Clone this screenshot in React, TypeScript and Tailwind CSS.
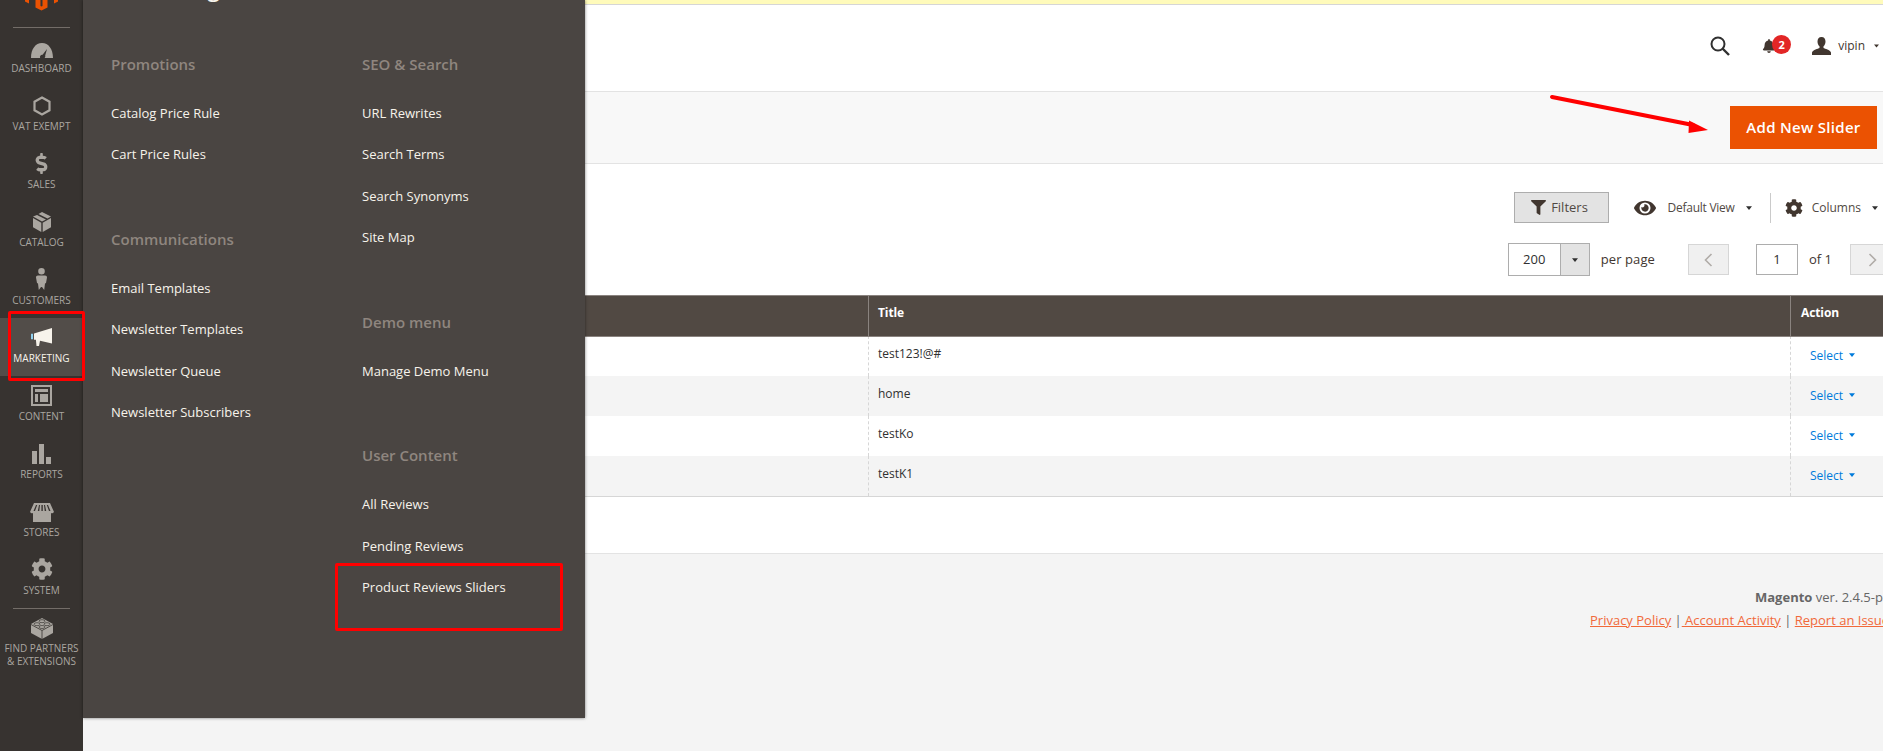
import React from "react";
import { FaBell, FaCog, FaEye, FaFilter, FaDollarSign } from "react-icons/fa";

const Caret = ({ c = "#303030", w = 8, h = 5 }: { c?: string; w?: number; h?: number }) => (
  <svg width={w} height={h} viewBox="0 0 8 5" className="shrink-0"><path d="M0 0h8L4 5z" fill={c} /></svg>
);

const Gauge = () => (
  <svg width="22" height="15" viewBox="0 0 22 15"><path fillRule="evenodd" fill="currentColor" d="M0 15C0 6 4.500 0 11 0s11 6 11 15H13.500c.7-.8 1-1.600.7-2.500L16 6l-4.400 5.800c-1.800-.2-3.100 1.400-2.500 3.200z" /></svg>
);
const Hexagon = () => (
  <svg width="18" height="20" viewBox="0 0 18 20"><path d="M9 1.500 16.500 5.700V14.300L9 18.500 1.500 14.300V5.700z" fill="none" stroke="currentColor" strokeWidth="2.200" /></svg>
);
const Cube = () => (
  <svg width="18" height="20" viewBox="0 0 18 20"><path fill="currentColor" d="M9 0 18 4.500 14.500 6.500 5.500 2zM4 3 13 7.500 9 9.500 0 4.500zM0 6 8.300 10.700V20L0 15.300zM18 6V15.300L9.700 20V10.700z" /></svg>
);
const Person = () => (
  <svg width="11" height="22" viewBox="0 0 11 22"><path fill="currentColor" d="M5.500 0a3.300 3.300 0 1 1 0 6.600 3.300 3.300 0 0 1 0-6.600zM2 7.500h7c1.300 0 2 .8 2 2L10 15l-1 .5-.8 6.500-2.200-3h-1L2.800 22 2 15.500 1 15 0 9.500c0-1.200.7-2 2-2z" /></svg>
);
const Megaphone = () => (
  <svg width="22" height="20" viewBox="0 0 22 20"><path fill="currentColor" d="M21 0v15.500L9 12.700 8 18H5.500l-.6-6.300H3V5.500z" /><path fill="#8fd0ee" d="M0 5.800h2v5.500H0z" /></svg>
);
const Layout = () => (
  <svg width="21" height="21" viewBox="0 0 21 21"><path fillRule="evenodd" fill="currentColor" d="M0 0h21v21H0zM2 2v17h17V2zM4 4h13v3H4zM4 9h3v8H4zM9 9h8v8H9z" /></svg>
);
const Bars = () => (
  <svg width="19" height="20" viewBox="0 0 19 20"><path fill="currentColor" d="M0 7h5v13H0zM7 0h5v20H7zM14 13h5v7h-5z" /></svg>
);
const Store = () => (
  <svg width="24" height="19" viewBox="0 0 24 19"><path fill="currentColor" fillRule="evenodd" d="M4 0h16l4 9c-1 1.500-2.500 1.500-3 1v9H3v-9c-.7.500-2 .500-3-1zM6 2 3.500 8h1.500L7.200 2zM9 2 7.800 8h1.500l.7-6zM11.400 2v6h1.400V2zM14 2l.7 6h1.500L15 2zM16.800 2 19 8h1.500L18 2z" /></svg>
);
const Brick = () => (
  <svg width="22" height="21" viewBox="0 0 22 21">
    <path fill="currentColor" d="M11 0 22 6V15L11 21 0 15V6z" />
    <path fill="none" stroke="#373330" strokeWidth="0.800" d="M0 6.500 11 12.500 22 6.500M11 12.500V21" />
    <ellipse cx="11" cy="3.200" rx="3" ry="1.500" fill="none" stroke="#373330" strokeWidth="0.700" />
    <ellipse cx="6" cy="6.200" rx="3" ry="1.500" fill="none" stroke="#373330" strokeWidth="0.700" />
    <ellipse cx="16" cy="6.200" rx="3" ry="1.500" fill="none" stroke="#373330" strokeWidth="0.700" />
    <ellipse cx="11" cy="9" rx="3" ry="1.500" fill="none" stroke="#373330" strokeWidth="0.700" />
  </svg>
);

const items: { label: string[]; icon: React.ReactNode; active?: boolean }[] = [
  { label: ["DASHBOARD"], icon: <Gauge /> },
  { label: ["VAT EXEMPT"], icon: <Hexagon /> },
  { label: ["SALES"], icon: <FaDollarSign size={21} /> },
  { label: ["CATALOG"], icon: <Cube /> },
  { label: ["CUSTOMERS"], icon: <Person /> },
  { label: ["MARKETING"], icon: <Megaphone />, active: true },
  { label: ["CONTENT"], icon: <Layout /> },
  { label: ["REPORTS"], icon: <Bars /> },
  { label: ["STORES"], icon: <Store /> },
  { label: ["SYSTEM"], icon: <FaCog size={22} /> },
];

const SideItem = ({ label, icon, active }: { label: string[]; icon: React.ReactNode; active?: boolean }) => (
  <div className={`h-[58px] flex flex-col items-center ${active ? "bg-[#524d49] text-[#f7f3eb]" : "text-[#aaa6a0]"}`}>
    <div className="h-[30px] flex items-end justify-center">{icon}</div>
    <div className="mt-[4px] text-[10px] leading-[13px] text-center whitespace-nowrap">
      {label.map((l) => (<div key={l}>{l}</div>))}
    </div>
  </div>
);

const Section = ({ title, links, first }: { title: string; links: string[]; first?: boolean }) => (
  <div className={first ? "" : "mt-[53.500px]"}>
    <div className="h-[22px] leading-[22px] text-[15px] font-semibold text-[#8f867f] whitespace-nowrap">{title}</div>
    <div className="mt-[17px]">
      {links.map((l) => (
        <div key={l} className="h-[41.250px] leading-[43px] text-[13px] font-medium text-[#f7f3eb] whitespace-nowrap">{l}</div>
      ))}
    </div>
  </div>
);

const rows = ["test123!@#", "home", "testKo", "testK1"];

export default function App() {
  return (
    <div className="relative flex w-[1883px] h-[751px] overflow-hidden bg-[#f5f5f5] text-[#303030] font-['Open_Sans',sans-serif]">
      {/* Sidebar */}
      <aside className="w-[83px] shrink-0 bg-[#373330] flex flex-col">
        <div className="h-[11px] flex justify-center">
          <svg width="33" height="11" viewBox="0 0 33 11">
            <path fill="#eb5202" d="M0 0h4v3.500L0 1.500zM33 0h-4v3.500L33 1.500zM10.500 0h5v6l1 .6 1-.6V0h5v7.500L16.500 10.500l-6-3z" />
          </svg>
        </div>
        <div className="mt-[16px] mx-[13px] h-px bg-[#736d68]" />
        <div>
          {items.map((i) => (<SideItem key={i.label[0]} {...i} />))}
        </div>
        <div className="mx-[13px] h-px bg-[#736d68]" />
        <div className="flex flex-col items-center text-[#aaa6a0]">
          <div className="h-[30px] flex items-end"><Brick /></div>
          <div className="mt-[3px] text-[10px] leading-[13px] text-center whitespace-nowrap">
            <div>FIND PARTNERS</div>
            <div>&amp; EXTENSIONS</div>
          </div>
        </div>
      </aside>

      {/* Main */}
      <main className="flex-1 min-w-0 flex flex-col">
        <div className="h-[5px] shrink-0 bg-[#fffbbb] border-b border-[#d6d6d6]" />
        <header className="h-[87px] shrink-0 bg-white border-b border-[#e3e3e3] flex items-center justify-end pb-[4px]">
          <svg width="20" height="20" viewBox="0 0 20 20" className="mr-[32px]"><circle cx="8" cy="8" r="6.500" fill="none" stroke="#303030" strokeWidth="2" /><path d="M12.500 12.500 19 19" stroke="#303030" strokeWidth="2.400" /></svg>
          <div className="relative w-[29px] mr-[21px]">
            <FaBell size={14} className="text-[#41362f]" />
            <div className="absolute left-[10px] top-[-4px] w-[19px] h-[19px] rounded-full bg-[#e22626] text-white text-[11px] font-bold leading-[19px] text-center">2</div>
          </div>
          <svg width="19" height="18" viewBox="0 0 19 18" className="mr-[7px]"><path fill="#41362f" d="M9.500 0c2.700 0 4 2 4 4.500 0 2-.8 3.800-2 4.800v1.700c1.500 1 6.500 1.700 7.500 4.500V18H0v-2.500c1-2.800 6-3.500 7.500-4.500V9.300c-1.200-1-2-2.800-2-4.800C5.500 2 6.800 0 9.500 0z" /></svg>
          <span className="text-[12px] text-[#41362f] mr-[9px]">vipin</span>
          <Caret c="#41362f" w={5} h={4} />
          <div className="w-[4px]" />
        </header>
        <div className="h-[72px] shrink-0 bg-[#f8f8f8] border-b border-[#e3e3e3] flex items-start justify-end pt-[14px] pr-[6px]">
          <button className="w-[147px] h-[43px] bg-[#eb5202] text-white text-[15px] font-semibold tracking-[0.3px]">Add New Slider</button>
        </div>
        <section className="h-[390px] shrink-0 bg-white border-b border-[#e3e3e3] flex flex-col">
          <div className="mt-[28px] h-[31px] flex items-center justify-end pr-[5px]">
            <button className="w-[95px] h-[31px] pr-[5px] bg-[#e3e3e3] border border-[#adadad] flex items-center justify-center gap-[5px] text-[13px] text-[#514943]">
              <FaFilter size={15} className="text-[#41362f]" />Filters
            </button>
            <FaEye size={22} className="ml-[25px] text-[#41362f]" />
            <span className="ml-[11px] text-[12px] tracking-[-0.25px] text-[#514943]">Default View</span>
            <span className="ml-[11px]"><Caret w={6} h={4} /></span>
            <div className="ml-[18px] w-px h-[30px] bg-[#cacaca]" />
            <FaCog size={18} className="ml-[14px] text-[#41362f]" />
            <span className="ml-[9px] text-[12px] text-[#514943]">Columns</span>
            <span className="ml-[11px]"><Caret w={6} h={4} /></span>
          </div>
          <div className="mt-[20px] h-[33px] flex items-center justify-end">
            <div className="w-[82px] h-[33px] flex border border-[#adadad]">
              <div className="w-[51px] text-center text-[13px] leading-[31px] text-[#303030]">200</div>
              <div className="flex-1 bg-[#e3e3e3] border-l border-[#adadad] flex items-center justify-center"><Caret w={6} h={4} /></div>
            </div>
            <span className="ml-[11px] text-[13px] tracking-[0.1px] text-[#41362f]">per page</span>
            <div className="ml-[33px] w-[41px] h-[31px] bg-[#f0f0f0] border border-[#d6d6d6] flex items-center justify-center">
              <svg width="9" height="14" viewBox="0 0 9 14"><path d="M7.500 1 1.500 7l6 6" fill="none" stroke="#b0aca8" strokeWidth="1.600" /></svg>
            </div>
            <div className="ml-[27px] w-[42px] h-[31px] border border-[#adadad] text-center text-[13px] leading-[29px]">1</div>
            <span className="ml-[11px] text-[13px] text-[#41362f]">of 1</span>
            <div className="ml-[18px] w-[41px] h-[31px] bg-[#f0f0f0] border border-[#d6d6d6] flex items-center pl-[17px] mr-[-8px]">
              <svg width="9" height="14" viewBox="0 0 9 14"><path d="M1.500 1l6 6-6 6" fill="none" stroke="#b0aca8" strokeWidth="1.600" /></svg>
            </div>
          </div>
          <div className="mt-[19px] border-b border-[#d6d6d6]">
            <div className="relative z-10 h-[42px] mb-[-1px] flex bg-[#514943] border-y border-[#8a837f] text-white text-[12px] font-bold">
              <div className="flex-1" />
              <div className="w-[922px] border-l border-[#8a837f] pl-[9px] leading-[33px] tracking-[-0.1px]">Title</div>
              <div className="w-[93px] border-l border-[#8a837f] pl-[10px] leading-[33px] tracking-[-0.1px]">Action</div>
            </div>
            {rows.map((r, i) => (
              <div key={r} className={`h-[40px] flex ${i % 2 ? "bg-[#f4f4f4]" : "bg-white"}`}>
                <div className="flex-1" />
                <div className="w-[922px] border-l border-dashed border-[#d6d6d6] pl-[9px] pt-[9px] text-[12px] leading-[18px] text-[#303030]">{r}</div>
                <div className="w-[93px] border-l border-dashed border-[#d6d6d6] pl-[19px] flex items-start pt-[11px] gap-[6px] text-[12px] leading-[18px] text-[#007bdb]">
                  Select
                  <span className="mt-[6px]"><Caret c="#007bdb" w={6} h={4} /></span>
                </div>
              </div>
            ))}
          </div>
        </section>
        <footer className="flex-1 bg-[#f4f4f4] pt-[33px] text-[13px] whitespace-nowrap overflow-hidden">
          <div className="pl-[1672px] leading-[20px] text-[#666]"><b className="font-bold">Magento</b> ver. 2.4.5-p1</div>
          <div className="pl-[1507px] mt-[3px] leading-[20px] text-[#666]">
            <span className="text-[#f1693a] underline">Privacy Policy</span> |<span className="text-[#f1693a] underline whitespace-pre"> Account Activity</span> | <span className="text-[#f1693a] underline">Report an Issue</span>
          </div>
        </footer>
      </main>

      {/* Flyout menu */}
      <div className="absolute z-20 left-[83px] top-0 w-[502px] h-[718px] bg-[#4a4542] overflow-hidden shadow-[0_0_3px_rgba(0,0,0,0.5)] pl-[28px]">
        <div className="mt-[-27px] h-[30px] text-[22px] leading-[30px] font-semibold text-[#f7f3eb]">Marketing</div>
        <div className="mt-[50px] flex">
          <div className="w-[251px]">
            <Section first title="Promotions" links={["Catalog Price Rule", "Cart Price Rules"]} />
            <Section title="Communications" links={["Email Templates", "Newsletter Templates", "Newsletter Queue", "Newsletter Subscribers"]} />
          </div>
          <div>
            <Section first title="SEO & Search" links={["URL Rewrites", "Search Terms", "Search Synonyms", "Site Map"]} />
            <Section title="Demo menu" links={["Manage Demo Menu"]} />
            <Section title="User Content" links={["All Reviews", "Pending Reviews", "Product Reviews Sliders"]} />
          </div>
        </div>
      </div>

      {/* Annotations */}
      <div className="absolute z-30 left-[8px] top-[311px] w-[77px] h-[70px] border-[3px] border-[#ff0000] rounded-[2px]" />
      <div className="absolute z-30 left-[335px] top-[563px] w-[228px] h-[68px] border-[3px] border-[#ff0000] rounded-[2px]" />
      <svg className="absolute z-30 left-[1548px] top-[92px]" width="164" height="44" viewBox="0 0 164 44">
        <path d="M4 5 145 33" stroke="#ff0000" strokeWidth="4" strokeLinecap="round" />
        <path d="M141 28.500 160 38 140.500 41z" fill="#ff0000" />
      </svg>
    </div>
  );
}
